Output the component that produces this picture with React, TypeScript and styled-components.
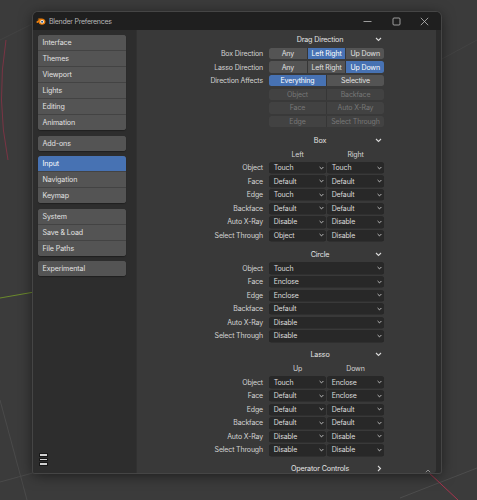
import styled, { createGlobalStyle } from 'styled-components'

const GlobalStyle = createGlobalStyle`
  html, body {
    margin: 0;
    padding: 0;
  }
  body {
    width: 477px;
    height: 500px;
    overflow: hidden;
    font-family: Inter, 'Noto Sans', sans-serif;
    -webkit-font-smoothing: antialiased;
  }
`

const viewportSvg = `<svg xmlns='http://www.w3.org/2000/svg' width='477' height='500'>
<g fill='none' stroke-width='1'>
<path d='M0 400 L27 500' stroke='#4a4a4a'/>
<path d='M0 482 L40 471' stroke='#4a4a4a'/>
<path d='M0 40 L40 20' stroke='#434343'/>
<path d='M440 60 L477 40' stroke='#434343'/>
<path d='M400 498 L477 468' stroke='#4d4d4d'/>
<path d='M0 298 L40 291' stroke='#6b8a2c'/>
<path d='M426 470 L458 500' stroke='#a8344e'/>
<path d='M6 40 Q-4 100 8 160' stroke='#7a3444'/>
</g></svg>`

const viewportBg = `url("data:image/svg+xml,${encodeURIComponent(viewportSvg)}")`

const groups = [
  ['Interface', 'Themes', 'Viewport', 'Lights', 'Editing', 'Animation'],
  ['Add-ons'],
  ['Input', 'Navigation', 'Keymap'],
  ['System', 'Save & Load', 'File Paths'],
  ['Experimental'],
]

type Seg = { label: string; active?: boolean }

const directionRows: { label: string; segs: Seg[] }[] = [
  {
    label: 'Box Direction',
    segs: [{ label: 'Any' }, { label: 'Left Right', active: true }, { label: 'Up Down' }],
  },
  {
    label: 'Lasso Direction',
    segs: [{ label: 'Any' }, { label: 'Left Right' }, { label: 'Up Down', active: true }],
  },
  {
    label: 'Direction Affects',
    segs: [{ label: 'Everything', active: true }, { label: 'Selective' }],
  },
]

const disabledRows = [
  ['Object', 'Backface'],
  ['Face', 'Auto X-Ray'],
  ['Edge', 'Select Through'],
]

const props = ['Object', 'Face', 'Edge', 'Backface', 'Auto X-Ray', 'Select Through']

const boxValues = [
  ['Touch', 'Touch'],
  ['Default', 'Default'],
  ['Touch', 'Default'],
  ['Default', 'Default'],
  ['Disable', 'Disable'],
  ['Object', 'Disable'],
]

const circleValues = ['Touch', 'Enclose', 'Enclose', 'Default', 'Disable', 'Disable']

const lassoValues = [
  ['Touch', 'Enclose'],
  ['Default', 'Enclose'],
  ['Default', 'Default'],
  ['Default', 'Default'],
  ['Disable', 'Disable'],
  ['Disable', 'Disable'],
]

function BlenderLogo() {
  return (
    <svg width="10" height="8" viewBox="0 0 20 16">
      <path
        d="M1 9 L7 5 L3 5 L5 3 L11 3 C16 3 19 6 19 9.5 C19 13 16 15.5 12 15.5 C8 15.5 5.5 13 5.5 10.5 L3 12 C2 12.5 0.5 11 1 9 Z"
        fill="#e87d0d"
      />
      <circle cx="12.2" cy="9.5" r="3.6" fill="#fff" />
      <circle cx="12.2" cy="9.5" r="2.1" fill="#265787" />
    </svg>
  )
}

function Chevron({ small }: { small?: boolean }) {
  return small ? (
    <svg width="5" height="4" viewBox="0 0 5 4">
      <polyline points="0.6,1 2.5,2.9 4.4,1" fill="none" stroke="#cfcfcf" strokeWidth="0.9" />
    </svg>
  ) : (
    <svg width="7" height="5" viewBox="0 0 7 5">
      <polyline points="1,1 3.5,3.5 6,1" fill="none" stroke="#d8d8d8" strokeWidth="1.1" />
    </svg>
  )
}

function ChevronRight() {
  return (
    <svg width="5" height="7" viewBox="0 0 5 7">
      <polyline points="1,1 3.5,3.5 1,6" fill="none" stroke="#d8d8d8" strokeWidth="1.1" />
    </svg>
  )
}

function Dropdown({ value }: { value: string }) {
  return (
    <Select>
      <span>{value}</span>
      <Chevron small />
    </Select>
  )
}

export default function App() {
  return (
    <Desktop style={{ backgroundImage: viewportBg }}>
      <GlobalStyle />
      <Window>
        <TitleBar>
          <TitleLeft>
            <BlenderLogo />
            <TitleText>Blender Preferences</TitleText>
          </TitleLeft>
          <Controls>
            <Control>
              <svg width="9" height="9" viewBox="0 0 9 9">
                <line x1="0.5" y1="4.5" x2="8.5" y2="4.5" stroke="#bdbdbd" strokeWidth="0.8" />
              </svg>
            </Control>
            <Control>
              <svg width="9" height="9" viewBox="0 0 9 9">
                <rect x="1" y="1" width="7" height="7" rx="1" fill="none" stroke="#bdbdbd" strokeWidth="0.8" />
              </svg>
            </Control>
            <Control>
              <svg width="9" height="9" viewBox="0 0 9 9">
                <path d="M0.8 0.8 L8.2 8.2 M8.2 0.8 L0.8 8.2" stroke="#bdbdbd" strokeWidth="0.8" />
              </svg>
            </Control>
          </Controls>
        </TitleBar>
        <Body>
          <Sidebar>
            {groups.map((group) => (
              <NavGroup key={group[0]}>
                {group.map((item) => (
                  <NavItem key={item} $active={item === 'Input'}>
                    {item}
                  </NavItem>
                ))}
              </NavGroup>
            ))}
            <Hamburger>
              <span />
              <span />
              <span />
            </Hamburger>
          </Sidebar>
          <Main>
            <Section>
              <PanelHeader>
                <span />
                <span>Drag Direction</span>
                <HeaderIcon>
                  <Chevron />
                </HeaderIcon>
              </PanelHeader>
              {directionRows.map((row) => (
                <Row key={row.label}>
                  <Label>{row.label}</Label>
                  <Segmented>
                    {row.segs.map((s) => (
                      <SegButton key={s.label} $active={s.active}>
                        {s.label}
                      </SegButton>
                    ))}
                  </Segmented>
                </Row>
              ))}
              {disabledRows.map((pair) => (
                <Row key={pair[0]}>
                  <span />
                  <Segmented>
                    {pair.map((p) => (
                      <SegButton key={p} $disabled>
                        {p}
                      </SegButton>
                    ))}
                  </Segmented>
                </Row>
              ))}
            </Section>

            <Section>
              <PanelHeader>
                <span />
                <span>Box</span>
                <HeaderIcon>
                  <Chevron />
                </HeaderIcon>
              </PanelHeader>
              <Row>
                <span />
                <Columns>
                  <ColumnTitle>Left</ColumnTitle>
                  <ColumnTitle>Right</ColumnTitle>
                </Columns>
              </Row>
              {props.map((p, i) => (
                <Row key={p}>
                  <Label>{p}</Label>
                  <Columns>
                    <Dropdown value={boxValues[i][0]} />
                    <Dropdown value={boxValues[i][1]} />
                  </Columns>
                </Row>
              ))}
            </Section>

            <Section>
              <PanelHeader>
                <span />
                <span>Circle</span>
                <HeaderIcon>
                  <Chevron />
                </HeaderIcon>
              </PanelHeader>
              {props.map((p, i) => (
                <Row key={p}>
                  <Label>{p}</Label>
                  <Dropdown value={circleValues[i]} />
                </Row>
              ))}
            </Section>

            <Section>
              <PanelHeader>
                <span />
                <span>Lasso</span>
                <HeaderIcon>
                  <Chevron />
                </HeaderIcon>
              </PanelHeader>
              <Row>
                <span />
                <Columns>
                  <ColumnTitle>Up</ColumnTitle>
                  <ColumnTitle>Down</ColumnTitle>
                </Columns>
              </Row>
              {props.map((p, i) => (
                <Row key={p}>
                  <Label>{p}</Label>
                  <Columns>
                    <Dropdown value={lassoValues[i][0]} />
                    <Dropdown value={lassoValues[i][1]} />
                  </Columns>
                </Row>
              ))}
            </Section>

            <Section>
              <PanelHeader>
                <span />
                <span>Operator Controls</span>
                <HeaderIcon>
                  <ChevronRight />
                </HeaderIcon>
              </PanelHeader>
            </Section>
            <ScrollArrow>
              <svg width="6" height="4" viewBox="0 0 6 4">
                <polyline points="0.8,3.2 3,1 5.2,3.2" fill="none" stroke="#9a9a9a" strokeWidth="0.9" />
              </svg>
            </ScrollArrow>
          </Main>
        </Body>
      </Window>
    </Desktop>
  )
}

const Desktop = styled.div`
  width: 477px;
  height: 500px;
  box-sizing: border-box;
  padding: 12px 0 0 33px;
  background-color: #3b3b3b;
  background-repeat: no-repeat;
`

const Window = styled.div`
  width: 408px;
  height: 461px;
  display: flex;
  flex-direction: column;
  background: #2b2b2b;
  border-radius: 5px 5px 2px 2px;
  box-shadow: 0 0 0 1px #454545, 0 2px 14px rgba(0, 0, 0, 0.55);
  overflow: hidden;
`

const TitleBar = styled.div`
  height: 18px;
  flex-shrink: 0;
  background: #1f1f1f;
  display: flex;
  align-items: center;
  justify-content: space-between;
`

const TitleLeft = styled.div`
  display: flex;
  align-items: center;
  gap: 3px;
  padding-left: 3px;
`

const TitleText = styled.span`
  font-size: 7px;
  letter-spacing: -0.25px;
  color: #b8b8b8;
`

const Controls = styled.div`
  display: flex;
  padding-right: 2px;
`

const Control = styled.div`
  width: 28.5px;
  height: 18px;
  display: flex;
  align-items: center;
  justify-content: center;
`

const Body = styled.div`
  flex: 1;
  display: flex;
  min-height: 0;
`

const Sidebar = styled.div`
  width: 103px;
  flex-shrink: 0;
  box-sizing: border-box;
  padding: 5px 5px 7px 5px;
  background: #2d2d2d;
  display: flex;
  flex-direction: column;
  gap: 5.5px;
`

const NavGroup = styled.div`
  width: 88px;
  border-radius: 3px;
  overflow: hidden;
  display: flex;
  flex-direction: column;
  background: #545454;
  box-shadow: 0 1px 1px rgba(0, 0, 0, 0.3);
`

const NavItem = styled.div<{ $active?: boolean }>`
  height: 15px;
  display: flex;
  align-items: center;
  padding-left: 4.5px;
  font-size: 7.1px;
  letter-spacing: -0.1px;
  color: ${(p) => (p.$active ? '#ffffff' : '#e2e2e2')};
  background: ${(p) => (p.$active ? '#4772b3' : '#545454')};

  & + & {
    border-top: 1px solid #434343;
  }
`

const Hamburger = styled.div`
  margin-top: auto;
  width: 9px;
  display: flex;
  flex-direction: column;
  gap: 1px;
  padding-left: 0.5px;

  span {
    height: 1.6px;
    background: #d0d0d0;
    border: 0.5px solid #161616;
    border-radius: 0.5px;
  }
`

const Main = styled.div`
  flex: 1;
  position: relative;
  margin-right: 5px;
  box-sizing: border-box;
  padding-top: 4.3px;
  background: #393939;
  border-left: 1px solid #313131;
  border-radius: 0 0 3px 0;
  display: flex;
  flex-direction: column;
  gap: 7.6px;
  font-size: 7px;
  letter-spacing: -0.15px;
`

const Section = styled.div`
  display: flex;
  flex-direction: column;
  gap: 2.2px;
`

const PanelHeader = styled.div`
  height: 11.4px;
  width: 128px;
  margin-left: 119px;
  display: grid;
  grid-template-columns: 1fr auto 1fr;
  align-items: center;
  color: #e4e4e4;
  font-size: 7.2px;
`

const HeaderIcon = styled.span`
  justify-self: end;
  display: flex;
  margin-right: 2px;
`

const Row = styled.div`
  height: 11.4px;
  display: grid;
  grid-template-columns: 126px 115px;
  column-gap: 6px;
  align-items: stretch;
`

const Label = styled.span`
  text-align: right;
  align-self: center;
  color: #d4d4d4;
  white-space: nowrap;
`

const Segmented = styled.div`
  display: flex;
  border-radius: 2.5px;
  overflow: hidden;
  gap: 1px;
  background: #363636;
`

const SegButton = styled.div<{ $active?: boolean; $disabled?: boolean }>`
  flex: 1;
  display: flex;
  align-items: center;
  justify-content: center;
  white-space: nowrap;
  background: ${(p) => (p.$active ? '#4772b3' : p.$disabled ? '#424242' : '#545454')};
  color: ${(p) => (p.$active ? '#ffffff' : p.$disabled ? '#777777' : '#e2e2e2')};
`

const Columns = styled.div`
  display: grid;
  grid-template-columns: 1fr 1fr;
  column-gap: 1px;
`

const ColumnTitle = styled.span`
  align-self: center;
  text-align: center;
  color: #d4d4d4;
`

const Select = styled.div`
  display: flex;
  align-items: center;
  justify-content: space-between;
  padding: 0 2.5px 0 4.7px;
  background: #282828;
  border-radius: 2.5px;
  color: #dcdcdc;
  white-space: nowrap;
  box-shadow: 0 0.5px 0 rgba(0, 0, 0, 0.35);
`

const ScrollArrow = styled.div`
  position: absolute;
  right: 5px;
  bottom: 0;
  display: flex;
`
